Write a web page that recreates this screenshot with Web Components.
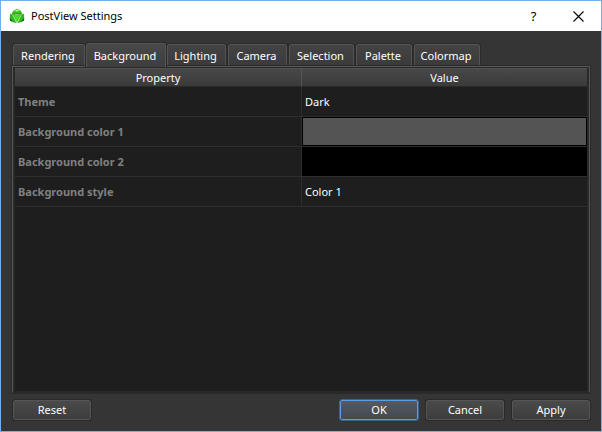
<!DOCTYPE html>
<html lang="en">
<head>
<meta charset="utf-8">
<title>PostView Settings</title>
<style>
html, body { height: 100%; margin: 0; }
body { font: 11px/16px "Noto Sans", "Open Sans", sans-serif; color: #fff; background: #353535; }
</style>
</head>
<body>
<settings-window>
  <title-bar slot="title">PostView Settings</title-bar>
  <tab-strip slot="tabs" labels="Rendering,Background,Lighting,Camera,Selection,Palette,Colormap" selected="1"></tab-strip>
  <property-table slot="page"></property-table>
  <push-button slot="left">Reset</push-button>
  <push-button slot="right" primary>OK</push-button>
  <push-button slot="right">Cancel</push-button>
  <push-button slot="right">Apply</push-button>
</settings-window>

<script>
class SettingsWindow extends HTMLElement {
  constructor() {
    super();
    this.attachShadow({ mode: "open" }).innerHTML = `
    <style>
      :host { display: flex; flex-direction: column; box-sizing: border-box; min-height: 100vh;
        border: 1px solid #74b0f0; background: #353535; }
      main { flex: 1; display: flex; flex-direction: column; padding: 12px 11px 0; }
      .pane { flex: 1; display: flex; padding: 1px; border: 1px solid #595959; border-bottom-color: #292929;
        outline: 1px solid #2a2a2a; background: #292929; }
      ::slotted(property-table) { flex: 1; }
      footer { display: flex; justify-content: space-between; padding: 7px 11px 11px 12px; }
      .group { display: flex; gap: 8px; }
    </style>
    <slot name="title"></slot>
    <main><slot name="tabs"></slot><div class="pane"><slot name="page"></slot></div></main>
    <footer><div class="group"><slot name="left"></slot></div><div class="group"><slot name="right"></slot></div></footer>`;
  }
}

class TitleBar extends HTMLElement {
  constructor() {
    super();
    this.attachShadow({ mode: "open" }).innerHTML = `
    <style>
      :host { display: flex; align-items: center; height: 30px; background: #fff; color: #000; }
      .logo { width: 16px; height: 16px; margin: 0 6px 0 8px; }
      h1 { flex: 1; margin: 0; font: inherit; }
      button { width: 45px; height: 30px; padding: 0; border: 0; background: none; color: #000;
        font: 13px "Noto Sans", sans-serif; display: grid; place-items: center; }
    </style>
    <svg class="logo" viewBox="0 0 16 16">
      <defs><linearGradient id="g" x1="0" y1="0" x2="0" y2="1"><stop offset="0" stop-color="#5be036"/><stop offset="1" stop-color="#25a811"/></linearGradient></defs>
      <path fill="url(#g)" d="M8 .5 12 3 13.500 6.500 8 6 2.500 6.500 4 3Z"/>
      <path fill="#48d927" d="M3.800 7h8.400L8 14.500Z"/>
      <path fill="#2cb816" d="M1 5.500 3 7l4 8-3.500-1L.8 11.500ZM15 5.500 13 7 9 15l3.500-1 2.700-2.500Z"/>
      <path fill="none" stroke="#1c8a10" stroke-width=".6" d="M2 6.800 8 6.300l6 .5M3.300 7.300l4 7.500M12.700 7.300l-4 7.500"/>
      <path fill="#0a4d05" d="M.8 10 4 14.300 1 12.500ZM15.200 10 12 14.300l3-1.800Z"/>
      <path fill="#9af57b" d="M8 1.300 10.300 2.700 8 3.800 5.700 2.700Z"/>
    </svg>
    <h1><slot></slot></h1>
    <button type="button">?</button>
    <button type="button" aria-label="Close"><svg width="11" height="11" viewBox="0 0 11 11"><path d="M.5.500l10 10M10.500.500l-10 10" stroke="#000" stroke-width="1.100"/></svg></button>`;
  }
}

class TabStrip extends HTMLElement {
  connectedCallback() {
    const root = this.shadowRoot || this.attachShadow({ mode: "open" });
    const selected = Number(this.getAttribute("selected"));
    root.innerHTML = `
    <style>
      :host { display: block; }
      div { display: grid; grid-template-columns: 74px 80px 61px 61px 67px 58px 68px; align-items: end; height: 23px; }
      button { box-sizing: border-box; height: 21px; padding: 1px 2px 0 0; color: #fff; font: inherit; text-align: center; white-space: nowrap;
        border: 1px solid #555; border-bottom: 0; border-radius: 2px 2px 0 0; margin: 0 1px 1px 1px;
        background: linear-gradient(#434343, #3b3b3b); outline: 1px solid #2b2b2b; }
      button[aria-selected="true"] { height: 24px; margin: 0 0 -1px; padding-bottom: 1px; position: relative; z-index: 1;
        background: linear-gradient(#484848, #3e3e3e); clip-path: inset(-1px -1px 0); }
    </style>
    <div role="tablist">${this.getAttribute("labels").split(",").map((t, i) =>
      `<button type="button" role="tab" aria-selected="${i === selected}">${t}</button>`).join("")}</div>`;
  }
}

class PropertyTable extends HTMLElement {
  constructor() {
    super();
    this.attachShadow({ mode: "open" }).innerHTML = `
    <style>
      :host { display: block; background: #1e1e1e; border-right: 1px solid #292929; border-left: 1px solid #292929; }
      table { width: 100%; border-collapse: separate; border-spacing: 0; table-layout: fixed; }
      col:first-child { width: 287px; }
      thead th { box-sizing: border-box; height: 19px; padding: 0; font-weight: 400; line-height: 16px;
        background: linear-gradient(#484848, #3a3a3a); border-bottom: 1px solid #2a2a2a; border-top: 1px solid #505050; }
      thead th:first-child { border-right: 1px solid #555; }
      tbody th, td { box-sizing: border-box; height: 30px; padding: 0 3px; text-align: left; border-bottom: 1px solid #2e2e2e; }
      tbody th { font-weight: 700; color: #808080; border-right: 1px solid #2e2e2e; }
      td.color { padding: 0; }
      button { display: block; box-sizing: border-box; width: 100%; height: 29px; padding: 0; border: 1px solid #000; }
      .gray { background: #545454; } .black { background: #000; }
    </style>
    <table>
      <colgroup><col><col></colgroup>
      <thead><tr><th scope="col">Property</th><th scope="col">Value</th></tr></thead>
      <tbody>
        <tr><th scope="row">Theme</th><td>Dark</td></tr>
        <tr><th scope="row" id="c1">Background color 1</th><td class="color"><button type="button" class="gray" aria-labelledby="c1"></button></td></tr>
        <tr><th scope="row" id="c2">Background color 2</th><td class="color"><button type="button" class="black" aria-labelledby="c2"></button></td></tr>
        <tr><th scope="row">Background style</th><td>Color 1</td></tr>
      </tbody>
    </table>`;
  }
}

class PushButton extends HTMLElement {
  constructor() {
    super();
    this.attachShadow({ mode: "open" }).innerHTML = `
    <style>
      :host { display: block; }
      button { box-sizing: border-box; width: 78px; height: 20px; padding: 0; color: #fff; font: inherit;
        border: 1px solid #555; border-radius: 2px; outline: 1px solid #292929;
        background: linear-gradient(#4a4a4a, #3d3d3d); }
      :host([primary]) button { border-color: #5c9ce6; outline-color: #3d628c; background: linear-gradient(#555a63, #44484f); }
    </style>
    <button type="button"><slot></slot></button>`;
  }
}

customElements.define("title-bar", TitleBar);
customElements.define("tab-strip", TabStrip);
customElements.define("property-table", PropertyTable);
customElements.define("push-button", PushButton);
customElements.define("settings-window", SettingsWindow);
</script>
</body>
</html>
